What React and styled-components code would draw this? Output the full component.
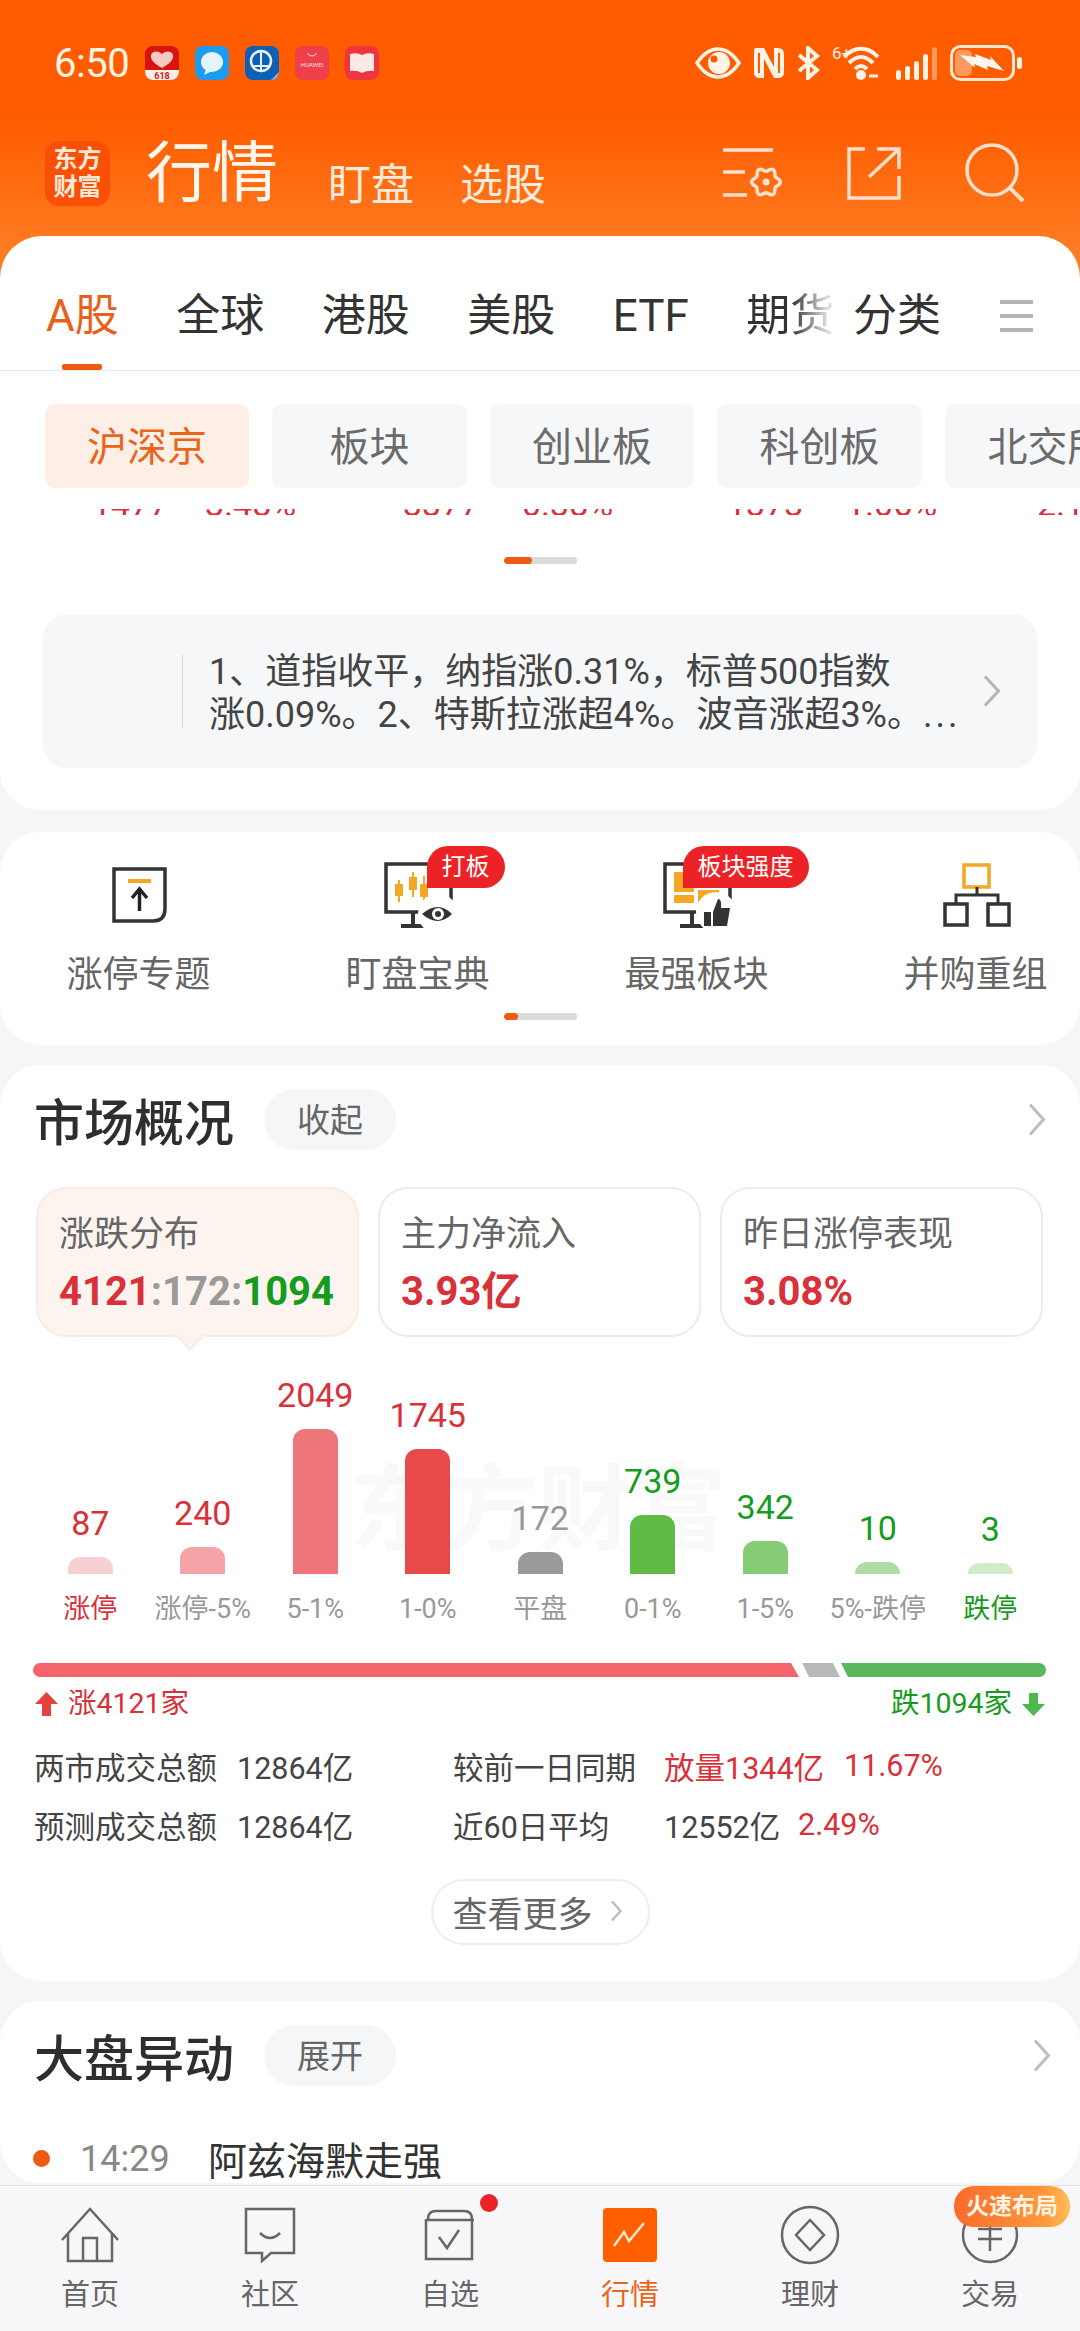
import React from "react";
import styled, { createGlobalStyle } from "styled-components";

const FONT = `Roboto, "Noto Sans CJK SC", sans-serif`;
const RED = "#d9303a";
const GREEN = "#169c1c";

const GlobalStyle = createGlobalStyle`
  html, body {
    margin: 0;
    padding: 0;
    background: #f5f6f8;
  }
  * {
    box-sizing: border-box;
  }
`;

const Page = styled.div`
  width: 1080px;
  height: 2331px;
  display: flex;
  flex-direction: column;
  overflow: hidden;
  font-family: ${FONT};
  color: #333;
  background: #f5f6f8;
`;

const Content = styled.div`
  flex: 1;
  min-height: 0;
  overflow: hidden;
`;

const Hero = styled.div`
  background: linear-gradient(#ff5c00 0, #ff5c00 120px, #ff7c22 250px, #ff7c22 100%);
`;

const StatusBar = styled.div`
  height: 126px;
  padding: 0 58px 0 54px;
  display: flex;
  align-items: center;
  color: #fff3e6;
`;

const Time = styled.div`
  width: 91px;
  font-size: 40px;
  letter-spacing: -0.5px;
`;

const Notices = styled.div`
  display: flex;
  gap: 16px;
`;

const Notice = styled.div`
  width: 34px;
  height: 34px;
  border-radius: 8px;
  overflow: hidden;
  background: ${(p) => p.$bg};
`;

const StatusIcons = styled.div`
  margin-left: auto;
  display: flex;
  align-items: center;
  gap: 12px;

  svg:nth-child(4) {
    margin-right: 5px;
  }
`;

const AppBar = styled.div`
  height: 110px;
  padding: 0 55px 16px 45px;
  display: flex;
  align-items: center;
`;

const Logo = styled.div`
  width: 65px;
  height: 65px;
  border-radius: 14px;
  background: #fa4f06;
  color: #ffe9d6;
  font-size: 24px;
  font-weight: 700;
  line-height: 28px;
  display: flex;
  flex-direction: column;
  align-items: center;
  justify-content: center;
`;

const Title = styled.div`
  margin: 2px 0 0 36px;
  width: 132px;
  font-size: 66px;
  line-height: 70px;
  color: #fff6ee;
`;

const SubTab = styled.div`
  margin: 24px 0 0 ${(p) => p.$left}px;
  font-size: 43px;
  line-height: 50px;
  color: #ffeadb;
`;

const AppActions = styled.div`
  margin-left: auto;
  display: flex;
  align-items: center;
  gap: 64px;
`;

const TabsPanel = styled.div`
  height: 135px;
  padding: 50px 0 0 46px;
  display: flex;
  background: #fff;
  border-radius: 42px 42px 0 0;
  border-bottom: 1px solid #e8e8ea;
`;

const TabList = styled.div`
  width: 789px;
  display: flex;
  gap: 57.5px;
  overflow: hidden;
`;

const Tab = styled.div`
  position: relative;
  flex: none;
  font-size: 44px;
  line-height: 60px;
  height: 84px;
  color: ${(p) => (p.$active ? "#e8601a" : "#333")};

  ${(p) =>
    p.$active &&
    `&::after {
      content: "";
      position: absolute;
      left: 16px;
      top: 78px;
      width: 40px;
      height: 6px;
      border-radius: 2px;
      background: #ee5b10;
    }`}
`;

const FadedTab = styled(Tab)`
  background: linear-gradient(90deg, #333 52%, #ddd 92%);
  -webkit-background-clip: text;
  background-clip: text;
  color: transparent;
`;

const CategoryTab = styled(Tab)`
  margin-left: 18px;
`;

const MenuBars = styled.div`
  margin: 14px 0 0 59px;
  width: 33px;
  height: 32px;
  display: flex;
  flex-direction: column;
  justify-content: space-between;

  span {
    height: 4px;
    background: #b4b4b4;
  }
`;

const QuoteCard = styled.div`
  background: #fff;
  border-radius: 0 0 40px 40px;
  padding: 33px 0 42px;
`;

const Chips = styled.div`
  display: flex;
  gap: 23px;
  padding-left: 45px;
  overflow: hidden;
`;

const Chip = styled.div`
  flex: none;
  width: ${(p) => p.$w}px;
  height: 84px;
  border-radius: 10px;
  font-size: 40px;
  line-height: 88px;
  text-align: center;
  color: ${(p) => (p.$active ? "#e8651c" : "#6b6b6b")};
  background: ${(p) => (p.$active ? "#fdeee6" : "#f6f7f9")};
`;

const ClippedQuotes = styled.div`
  height: 6px;
  margin-top: 21px;
  overflow: hidden;
  display: flex;
  align-items: flex-end;
  padding-left: 92px;
  font-size: 34px;
  line-height: 22px;
  color: ${RED};
`;

const ClippedValue = styled.span`
  flex: none;
  width: ${(p) => p.$w}px;
`;

const Pager = styled.div`
  width: 73px;
  height: 7px;
  margin: ${(p) => p.$top}px auto 0;
  border-radius: 4px;
  background: #dadada;
  overflow: hidden;
`;

const PagerFill = styled.div`
  height: 100%;
  width: ${(p) => p.$w}px;
  border-radius: 4px;
  background: #ee5b10;
`;

const NewsBox = styled.div`
  margin: 50px 43px 0;
  height: 154px;
  border-radius: 24px;
  background: #f6f7f9;
  display: flex;
  align-items: center;
  padding: 0 36px 0 139px;
`;

const NewsRule = styled.div`
  width: 1px;
  height: 73px;
  margin-right: 26px;
  background: #d8d8d8;
`;

const NewsText = styled.div`
  flex: 1;
  padding-top: 5px;
  font-size: 36px;
  line-height: 43px;
  color: #444;
  white-space: nowrap;
`;

const NewsMore = styled.span`
  letter-spacing: 3px;
`;

const Card = styled.div`
  background: #fff;
  border-radius: 40px;
  margin-top: ${(p) => p.$top}px;
`;

const ShortcutCard = styled(Card)`
  height: 213px;
  padding-top: 30px;
`;

const Shortcuts = styled.div`
  display: flex;
`;

const Shortcut = styled.div`
  flex: none;
  width: 279px;
  display: flex;
  flex-direction: column;
  align-items: center;
`;

const ShortcutIcon = styled.div`
  position: relative;
  width: ${(p) => p.$w}px;
  height: 66px;
  padding-top: ${(p) => p.$pad || 0}px;
`;

const ShortcutLabel = styled.div`
  margin: 24px 2px 0 0;
  font-size: 36px;
  line-height: 46px;
  color: #666;
`;

const HotTag = styled.div`
  position: absolute;
  top: -16px;
  left: ${(p) => p.$left}px;
  height: 42px;
  padding: 0 15px;
  border-radius: 21px 21px 21px 0;
  background: #ec2227;
  color: #fff;
  font-size: 24px;
  line-height: 42px;
  white-space: nowrap;
`;

const SectionHeader = styled.div`
  display: flex;
  align-items: center;
  padding: 24px 34px 0;
`;

const SectionTitle = styled.div`
  font-size: 50px;
  line-height: 61px;
  padding-top: 5px;
  height: 61px;
  font-weight: 500;
  color: #2e2e2e;
`;

const TogglePill = styled.div`
  margin-left: 30px;
  width: 132px;
  height: 61px;
  border-radius: 31px;
  background: #f5f6f8;
  font-size: 33px;
  line-height: 63px;
  text-align: center;
  color: #666;
`;

const SectionArrow = styled.div`
  margin-left: auto;
  margin-right: ${(p) => p.$right}px;
`;

const MarketCard = styled(Card)`
  padding-bottom: 36px;
`;

const Metrics = styled.div`
  display: flex;
  gap: 19px;
  margin: 37px 36px 0;
`;

const Metric = styled.div`
  position: relative;
  width: 323px;
  height: 150px;
  padding: 23px 0 0 21px;
  border-radius: 30px;
  border: 2px solid ${(p) => (p.$active ? "#f9ebe3" : "#ececec")};
  background: ${(p) => (p.$active ? "#fdf4ef" : "#fff")};

  ${(p) =>
    p.$active &&
    `&::after {
      content: "";
      position: absolute;
      left: 141px;
      bottom: -11px;
      width: 20px;
      height: 20px;
      background: #fdf4ef;
      border-right: 2px solid #f9ebe3;
      border-bottom: 2px solid #f9ebe3;
      transform: rotate(45deg);
    }`}
`;

const MetricTitle = styled.div`
  font-size: 35px;
  line-height: 46px;
  color: #666;
`;

const MetricValue = styled.div`
  margin-top: 11px;
  font-size: 40px;
  line-height: 46px;
  font-weight: 700;
  color: ${RED};
`;

const ValuePart = styled.span`
  color: ${(p) => p.$color};
`;

const Chart = styled.div`
  position: relative;
  height: 207px;
  margin-top: 30px;
  padding-left: 34px;
  display: flex;
  align-items: flex-end;
`;

const Watermark = styled.div`
  position: absolute;
  left: 350px;
  bottom: 8px;
  font-size: 94px;
  line-height: 110px;
  font-weight: 700;
  color: #f9f9f9;
  white-space: nowrap;
`;

const Column = styled.div`
  position: relative;
  width: 112.5px;
  display: flex;
  flex-direction: column;
  align-items: center;
`;

const BarValue = styled.div`
  font-size: 34px;
  line-height: 44px;
  margin-bottom: 12px;
  color: ${(p) => p.$color};
`;

const Bar = styled.div`
  width: 45px;
  border-radius: 12px 12px 0 0;
  background: ${(p) => p.$color};
`;

const AxisLabels = styled.div`
  display: flex;
  padding-left: 34px;
  margin-top: 18px;
`;

const AxisLabel = styled.div`
  width: 112.5px;
  text-align: center;
  font-size: 27px;
  line-height: 34px;
  white-space: nowrap;
  color: ${(p) => p.$color};
`;

const Split = styled.div`
  display: flex;
  height: 14px;
  margin: 37px 34px 0 33px;
`;

const SplitPart = styled.div`
  flex: none;
  width: ${(p) => p.$w}px;
  margin-left: ${(p) => p.$gap}px;
  background: ${(p) => p.$color};
  border-radius: ${(p) => p.$radius};
  clip-path: ${(p) => p.$clip};
`;

const Totals = styled.div`
  display: flex;
  justify-content: space-between;
  align-items: center;
  margin: 9px 34px 0;
  font-size: 28.5px;
  line-height: 36px;
`;

const TotalItem = styled.div`
  display: flex;
  align-items: center;
  gap: 9px;
  color: ${(p) => p.$color};
`;

const Stats = styled.div`
  margin: 14px 0 0 34px;
`;

const StatRow = styled.div`
  display: flex;
  align-items: center;
  height: 59px;
  font-size: 30.5px;
  color: #444;
  white-space: nowrap;
`;

const StatCell = styled.div`
  flex: none;
  width: ${(p) => p.$w}px;
`;

const Rise = styled.span`
  color: ${RED};
`;

const MoreButton = styled.div`
  width: 219px;
  height: 66px;
  margin: 25px auto 0;
  border: 2px solid #eeeeee;
  border-radius: 33px;
  display: flex;
  align-items: center;
  padding: 0 0 2px 20px;
  gap: 17px;
  font-size: 35px;
  color: #666;
`;

const MoveRow = styled.div`
  display: flex;
  align-items: center;
  margin: 47px 0 0 33px;
  height: 50px;
`;

const MoveDot = styled.div`
  width: 17px;
  height: 17px;
  border-radius: 50%;
  background: #ee5b10;
`;

const MoveTime = styled.div`
  margin-left: 30px;
  width: 128px;
  padding-top: 2px;
  font-size: 36px;
  color: #888;
`;

const MoveText = styled.div`
  font-size: 39px;
  color: #333;
`;

const Nav = styled.div`
  position: relative;
  height: 146px;
  flex: none;
  display: flex;
  background: #f7f7f9;
  border-top: 1px solid #e4e4e4;
`;

const NavItem = styled.div`
  position: relative;
  width: 180px;
  display: flex;
  flex-direction: column;
  align-items: center;
  padding-top: 19px;
`;

const NavIcon = styled.div`
  height: 60px;
  display: flex;
  align-items: center;
  justify-content: center;
`;

const NavLabel = styled.div`
  margin-top: 9px;
  font-size: 29px;
  line-height: 42px;
  color: ${(p) => (p.$active ? "#e8651c" : "#666")};
`;

const RedDot = styled.div`
  position: absolute;
  top: 8px;
  left: 120px;
  width: 18px;
  height: 18px;
  border-radius: 50%;
  background: #ec2227;
`;

const PromoTag = styled.div`
  position: absolute;
  right: 10px;
  top: 0;
  width: 116px;
  height: 41px;
  border-radius: 20px;
  background: linear-gradient(90deg, #fb6a2c, #ff9a3a 80%, #ffbe58);
  color: #fff2e0;
  font-size: 23px;
  font-weight: 700;
  line-height: 41px;
  text-align: center;
  white-space: nowrap;
`;

// scalloped gear outline used by the header settings icon
const gearPath = (() => {
  const pts = [];
  for (let i = 0; i < 72; i++) {
    const a = (i / 72) * Math.PI * 2;
    const r = 12.5 + 1.8 * Math.cos(a * 6);
    pts.push(`${(16 + r * Math.cos(a)).toFixed(1)} ${(15 + r * Math.sin(a)).toFixed(1)}`);
  }
  return `M${pts.join("L")}Z`;
})();

const Chevron = ({ w = 18, h = 33, color = "#bdbdbd", sw = 3 }) => (
  <svg width={w} height={h} viewBox={`0 0 ${w} ${h}`} style={{ display: "block" }}>
    <path d={`M2 1.5 L${w - 2.5} ${h / 2} L2 ${h - 1.5}`} fill="none" stroke={color} strokeWidth={sw} />
  </svg>
);

const EyeStatus = () => (
  <svg width="46" height="32" viewBox="0 0 46 32">
    <path d="M2 16 C10 4 17 2 23 2 C29 2 36 4 44 16 C36 28 29 30 23 30 C17 30 10 28 2 16Z" fill="none" stroke="#fff3e6" strokeWidth="3.5" />
    <circle cx="24" cy="16" r="11" fill="#fff3e6" />
    <circle cx="19" cy="12" r="3.5" fill="#ff5c00" />
  </svg>
);

const NfcStatus = () => (
  <svg width="32" height="32" viewBox="0 0 32 32">
    <path d="M7 1 H2 Q1 1 1 7 V25 Q1 31 7 31 H11 V12 L21 31 H25 Q31 31 31 25 V7 Q31 1 25 1 H21 V20 L11 1Z" fill="#fff3e6" />
    <path d="M6 6 V26 M26 6 V26" stroke="#ff5c00" strokeWidth="2" />
    <path d="M14 4 L19 14" stroke="#ff5c00" strokeWidth="2" />
  </svg>
);

const BluetoothStatus = () => (
  <svg width="23" height="34" viewBox="0 0 23 34">
    <path d="M2 9 L20 24 L11 32 L11 2 L20 10 L2 25" fill="none" stroke="#fff3e6" strokeWidth="4" />
  </svg>
);

const WifiStatus = () => (
  <svg width="47" height="36" viewBox="0 0 47 36">
    <text x="0" y="14" fontSize="17" fill="#fff3e6" fontFamily="Roboto">6+</text>
    <path d="M12 12 C22 1 36 1 46 12 M17 18 C25 10 33 10 41 18 M23 24 C27 20 31 20 35 24" fill="none" stroke="#fff3e6" strokeWidth="4" />
    <circle cx="29" cy="30" r="5" fill="#fff3e6" />
    <path d="M37 31 H46" stroke="#fff3e6" strokeWidth="3" />
  </svg>
);

const SignalStatus = () => (
  <svg width="42" height="34" viewBox="0 0 42 34">
    <rect x="0" y="24" width="5" height="10" rx="2.5" fill="#fff3e6" />
    <rect x="9" y="20" width="5" height="14" rx="2.5" fill="#fff3e6" />
    <rect x="18" y="15" width="5" height="19" rx="2.5" fill="#fff3e6" />
    <rect x="27" y="8" width="5" height="26" rx="2.5" fill="#fff3e6" />
    <rect x="36" y="1" width="5" height="33" rx="2.5" fill="#ff9a5e" />
  </svg>
);

const BatteryStatus = () => (
  <svg width="72" height="36" viewBox="0 0 72 36">
    <rect x="1.5" y="1.5" width="62" height="33" rx="9" fill="none" stroke="#ffe6d2" strokeWidth="3" />
    <rect x="5" y="5" width="17" height="26" rx="5" fill="#ff9a5e" />
    <path d="M10 10 L26 12 L25 9 L41 15 L40 11 L54 26 L37 21 L38 25 L24 19 L25 23Z" fill="#fff6ee" />
    <rect x="67" y="12" width="5" height="12" rx="2.5" fill="#fff3e6" />
  </svg>
);

const SettingsAction = () => (
  <svg width="60" height="52" viewBox="0 0 60 52">
    <g transform="translate(27 20)">
      <path d={gearPath} fill="none" stroke="#fde0cc" strokeWidth="3.5" />
      <circle cx="16" cy="15" r="3.5" fill="#fde0cc" />
    </g>
    <path d="M0 3 H50 M0 25 H22 M0 48 H24" stroke="#fde0cc" strokeWidth="3.5" />
  </svg>
);

const ShareAction = () => (
  <svg width="54" height="53" viewBox="0 0 54 53">
    <path d="M18 2 H2 V51 H52 V29 M22 30 L52 2 M30 2 H52 V22" fill="none" stroke="#fde0cc" strokeWidth="3.5" />
  </svg>
);

const SearchAction = () => (
  <svg width="60" height="60" viewBox="0 0 60 60">
    <circle cx="27" cy="27" r="25" fill="none" stroke="#fde0cc" strokeWidth="3.5" />
    <path d="M45 45 L58 58" stroke="#fde0cc" strokeWidth="4" />
  </svg>
);

const LimitUpIcon = () => (
  <svg width="55" height="56" viewBox="0 0 55 56" style={{ display: "block" }}>
    <path d="M2 2 H53 V42 Q53 54 41 54 H2Z" fill="none" stroke="#333" strokeWidth="3.5" />
    <path d="M16 14 H39" stroke="#f5a623" strokeWidth="4" />
    <path d="M27.5 44 V24 M20 31 L27.5 22 L35 31" fill="none" stroke="#222" strokeWidth="3.5" />
  </svg>
);

const MonitorFrame = () => (
  <>
    <path d="M67 40 V2 H2 V50 H66" fill="none" stroke="#333" strokeWidth="3.5" />
    <path d="M29 50 V64 M17 64 H40" stroke="#333" strokeWidth="4" />
  </>
);

const WatchIcon = () => (
  <svg width="70" height="66" viewBox="0 0 70 66" style={{ display: "block" }}>
    <MonitorFrame />
    <path d="M15 18 V40 M29 10 V35 M40 14 V42" stroke="#f5a623" strokeWidth="2" />
    <rect x="11" y="22" width="8" height="12" fill="#f5a623" />
    <rect x="25" y="15" width="8" height="13" fill="#f5a623" />
    <rect x="36" y="22" width="8" height="13" fill="#f5a623" />
    <circle cx="54" cy="52" r="20" fill="#fff" />
    <path d="M38 52 Q54 38 68 52 Q54 66 38 52Z" fill="#333" />
    <circle cx="54" cy="52" r="6" fill="#fff" />
    <circle cx="54" cy="52" r="3" fill="#333" />
  </svg>
);

const BoardIcon = () => (
  <svg width="70" height="66" viewBox="0 0 70 66" style={{ display: "block" }}>
    <MonitorFrame />
    <rect x="11" y="10" width="20" height="20" fill="#f5a623" />
    <rect x="11" y="33" width="20" height="8" rx="1" fill="#f5a623" />
    <rect x="35" y="28" width="21" height="12" fill="#f5a623" />
    <circle cx="53" cy="50" r="20" fill="#fff" />
    <rect x="41" y="50" width="7" height="14" fill="#333" />
    <path d="M50 50 L55 37 Q59 37 58 46 H67 L64 64 H50Z" fill="#333" />
  </svg>
);

const MergeIcon = () => (
  <svg width="68" height="64" viewBox="0 0 68 64" style={{ display: "block" }}>
    <rect x="21" y="2" width="25" height="22" fill="none" stroke="#f5a623" strokeWidth="3.5" />
    <path d="M34 24 V32 M13 42 V32 H55 V42" fill="none" stroke="#333" strokeWidth="3" />
    <rect x="2" y="41" width="22" height="21" fill="none" stroke="#333" strokeWidth="3.5" />
    <rect x="45" y="41" width="21" height="21" fill="none" stroke="#333" strokeWidth="3.5" />
  </svg>
);

const ArrowUp = () => (
  <svg width="25" height="26" viewBox="0 0 25 26" style={{ display: "block" }}>
    <path d="M12.5 1 L24 13 H17 V25 H8 V13 H1Z" fill="#e8403c" />
  </svg>
);

const ArrowDown = () => (
  <svg width="25" height="25" viewBox="0 0 25 25" style={{ display: "block" }}>
    <path d="M12.5 24 L24 12 H17 V1 H8 V12 H1Z" fill="#4db84c" />
  </svg>
);

const navStroke = { fill: "none", stroke: "#666", strokeWidth: 2.5 };

const HomeNav = () => (
  <svg width="60" height="56" viewBox="0 0 60 56">
    <path d="M2 33 L30 2 L58 33 M8 27 V54 H52 V27 M23 54 V31 H37 V54" {...navStroke} />
  </svg>
);

const CommunityNav = () => (
  <svg width="52" height="56" viewBox="0 0 52 56">
    <path d="M2 2 H50 V46 H27 L18 54 V46 H2Z" {...navStroke} />
    <path d="M16 26 Q26 36 36 26" {...navStroke} />
  </svg>
);

const WatchNav = () => (
  <svg width="52" height="52" viewBox="0 0 52 52">
    <path d="M4 10 Q4 2 12 2 H40 Q48 2 48 10 V50 H2 V10 M2 11 H50" {...navStroke} />
    <path d="M15 28 L23 39 L35 21" {...navStroke} />
  </svg>
);

const MarketNav = () => (
  <svg width="54" height="54" viewBox="0 0 54 54">
    <rect width="54" height="54" rx="4" fill="#ff5f00" />
    <path d="M11 38 L21 24 L26 33 L41 15" fill="none" stroke="#ffe6d2" strokeWidth="2.5" />
  </svg>
);

const FinanceNav = () => (
  <svg width="60" height="60" viewBox="0 0 60 60">
    <circle cx="30" cy="30" r="28" {...navStroke} />
    <path d="M30 15 L44 30 L30 45 L16 30Z" {...navStroke} />
  </svg>
);

const TradeNav = () => (
  <svg width="60" height="60" viewBox="0 0 60 60">
    <circle cx="30" cy="30" r="27" {...navStroke} />
    <path d="M30 14 V46 M18 24 H42 M18 34 H42" {...navStroke} />
  </svg>
);

const bars = [
  { value: 87, label: "涨停", h: 17, bar: "#f8cfd2", text: RED, labelColor: RED },
  { value: 240, label: "涨停-5%", h: 27, bar: "#f4a4a9", text: RED, labelColor: "#999" },
  { value: 2049, label: "5-1%", h: 145, bar: "#ee7579", text: RED, labelColor: "#999" },
  { value: 1745, label: "1-0%", h: 125, bar: "#e84949", text: RED, labelColor: "#999" },
  { value: 172, label: "平盘", h: 22, bar: "#9a9a9a", text: "#999", labelColor: "#999" },
  { value: 739, label: "0-1%", h: 59, bar: "#5fbb46", text: GREEN, labelColor: "#999" },
  { value: 342, label: "1-5%", h: 33, bar: "#86cc75", text: GREEN, labelColor: "#999" },
  { value: 10, label: "5%-跌停", h: 12, bar: "#afdca3", text: GREEN, labelColor: "#999" },
  { value: 3, label: "跌停", h: 11, bar: "#d2ecca", text: GREEN, labelColor: GREEN },
];

const navItems = [
  { label: "首页", icon: <HomeNav /> },
  { label: "社区", icon: <CommunityNav /> },
  { label: "自选", icon: <WatchNav />, dot: true },
  { label: "行情", icon: <MarketNav />, active: true },
  { label: "理财", icon: <FinanceNav /> },
  { label: "交易", icon: <TradeNav /> },
];

const App = () => {
  return (
    <Page>
      <GlobalStyle />
      <Content>
        <Hero>
          <StatusBar>
            <Time>6:50</Time>
            <Notices>
              <Notice $bg="#d8140f">
                <svg width="34" height="34" viewBox="0 0 34 34" style={{ display: "block" }}>
                  <path d="M17 22 C10 18 5 14 6 9 C7 5 13 4 17 8 C21 4 27 5 28 9 C29 14 24 18 17 22Z" fill="#f8c9c0" />
                  <rect y="24" width="34" height="10" fill="#f7efe8" />
                  <text x="17" y="33" fontSize="9" fontWeight="700" textAnchor="middle" fill="#d8140f" fontFamily="Roboto">618</text>
                </svg>
              </Notice>
              <Notice $bg="#1c9bf0">
                <svg width="34" height="34" viewBox="0 0 34 34" style={{ display: "block" }}>
                  <ellipse cx="17" cy="16" rx="11" ry="10" fill="#e6f4fd" />
                  <path d="M11 23 L9 29 L17 25Z" fill="#e6f4fd" />
                </svg>
              </Notice>
              <Notice $bg="#0f5fb4">
                <svg width="34" height="34" viewBox="0 0 34 34" style={{ display: "block" }}>
                  <circle cx="16" cy="15" r="10" fill="none" stroke="#e8f2fb" strokeWidth="2.5" />
                  <path d="M16 6 V24 M9 20 H24" stroke="#e8f2fb" strokeWidth="2" />
                  <path d="M26 34 L34 26 V34Z" fill="#8ab8e6" />
                </svg>
              </Notice>
              <Notice $bg="#ee3f4a">
                <svg width="34" height="34" viewBox="0 0 34 34" style={{ display: "block" }}>
                  <path d="M12 7 Q17 13 22 7" fill="none" stroke="#ffe1e1" strokeWidth="1" />
                  <text x="17" y="21" fontSize="6.2" textAnchor="middle" fill="#ffe1e1" fontFamily="Roboto">HUAWEI</text>
                </svg>
              </Notice>
              <Notice $bg="#ee3540">
                <svg width="34" height="34" viewBox="0 0 34 34" style={{ display: "block" }}>
                  <path d="M5 8 Q12 6 17 9 Q22 6 29 8 V25 Q22 24 17 27 Q12 24 5 25Z" fill="#fde9e6" />
                </svg>
              </Notice>
            </Notices>
            <StatusIcons>
              <EyeStatus />
              <NfcStatus />
              <BluetoothStatus />
              <WifiStatus />
              <SignalStatus />
              <BatteryStatus />
            </StatusIcons>
          </StatusBar>
          <AppBar>
            <Logo>
              <span>东方</span>
              <span>财富</span>
            </Logo>
            <Title>行情</Title>
            <SubTab $left={50}>盯盘</SubTab>
            <SubTab $left={46}>选股</SubTab>
            <AppActions>
              <SettingsAction />
              <ShareAction />
              <SearchAction />
            </AppActions>
          </AppBar>
          <TabsPanel>
            <TabList>
              <Tab $active>A股</Tab>
              <Tab>全球</Tab>
              <Tab>港股</Tab>
              <Tab>美股</Tab>
              <Tab>ETF</Tab>
              <FadedTab>期货</FadedTab>
            </TabList>
            <CategoryTab>分类</CategoryTab>
            <MenuBars>
              <span />
              <span />
              <span />
            </MenuBars>
          </TabsPanel>
        </Hero>

        <QuoteCard>
          <Chips>
            <Chip $w={204} $active>沪深京</Chip>
            <Chip $w={195}>板块</Chip>
            <Chip $w={204}>创业板</Chip>
            <Chip $w={205}>科创板</Chip>
            <Chip $w={205}>北交所</Chip>
          </Chips>
          <ClippedQuotes>
            <ClippedValue $w={113}>1477</ClippedValue>
            <ClippedValue $w={198}>3.48%</ClippedValue>
            <ClippedValue $w={119}>3377</ClippedValue>
            <ClippedValue $w={205}>0.38%</ClippedValue>
            <ClippedValue $w={119}>1373</ClippedValue>
            <ClippedValue $w={191}>1.06%</ClippedValue>
            <ClippedValue $w={60}>2.1</ClippedValue>
          </ClippedQuotes>
          <Pager $top={42}>
            <PagerFill $w={28} />
          </Pager>
          <NewsBox>
            <NewsRule />
            <NewsText>
              <div>1、道指收平，纳指涨0.31%，标普500指数</div>
              <div>
                涨0.09%。2、特斯拉涨超4%。波音涨超3%。<NewsMore>...</NewsMore>
              </div>
            </NewsText>
            <Chevron w={18} h={32} color="#b5b5b5" />
          </NewsBox>
        </QuoteCard>

        <ShortcutCard $top={22}>
          <Shortcuts>
            <Shortcut>
              <ShortcutIcon $w={55} $pad={5}>
                <LimitUpIcon />
              </ShortcutIcon>
              <ShortcutLabel>涨停专题</ShortcutLabel>
            </Shortcut>
            <Shortcut>
              <ShortcutIcon $w={70}>
                <WatchIcon />
                <HotTag $left={43}>打板</HotTag>
              </ShortcutIcon>
              <ShortcutLabel>盯盘宝典</ShortcutLabel>
            </Shortcut>
            <Shortcut>
              <ShortcutIcon $w={70}>
                <BoardIcon />
                <HotTag $left={20}>板块强度</HotTag>
              </ShortcutIcon>
              <ShortcutLabel>最强板块</ShortcutLabel>
            </Shortcut>
            <Shortcut>
              <ShortcutIcon $w={68} $pad={1}>
                <MergeIcon />
              </ShortcutIcon>
              <ShortcutLabel>并购重组</ShortcutLabel>
            </Shortcut>
          </Shortcuts>
          <Pager $top={15}>
            <PagerFill $w={14} />
          </Pager>
        </ShortcutCard>

        <MarketCard $top={20}>
          <SectionHeader>
            <SectionTitle>市场概况</SectionTitle>
            <TogglePill>收起</TogglePill>
            <SectionArrow $right={0}>
              <Chevron />
            </SectionArrow>
          </SectionHeader>
          <Metrics>
            <Metric $active>
              <MetricTitle>涨跌分布</MetricTitle>
              <MetricValue>
                4121<ValuePart $color="#9a9a9a">:172:</ValuePart>
                <ValuePart $color={GREEN}>1094</ValuePart>
              </MetricValue>
            </Metric>
            <Metric>
              <MetricTitle>主力净流入</MetricTitle>
              <MetricValue>3.93亿</MetricValue>
            </Metric>
            <Metric>
              <MetricTitle>昨日涨停表现</MetricTitle>
              <MetricValue>3.08%</MetricValue>
            </Metric>
          </Metrics>
          <Chart>
            <Watermark>东方财富</Watermark>
            {bars.map((b) => (
              <Column key={b.label}>
                <BarValue $color={b.text}>{b.value}</BarValue>
                <Bar $color={b.bar} style={{ height: b.h }} />
              </Column>
            ))}
          </Chart>
          <AxisLabels>
            {bars.map((b) => (
              <AxisLabel key={b.label} $color={b.labelColor}>
                {b.label}
              </AxisLabel>
            ))}
          </AxisLabels>
          <Split>
            <SplitPart
              $w={766}
              $gap={0}
              $color="#f4646a"
              $radius="7px 0 0 7px"
              $clip="polygon(0 0, calc(100% - 8px) 0, 100% 100%, 0 100%)"
            />
            <SplitPart
              $w={38}
              $gap={3}
              $color="#b9b9b9"
              $radius="0"
              $clip="polygon(0 0, calc(100% - 7px) 0, 100% 100%, 7px 100%)"
            />
            <SplitPart
              $w={205}
              $gap={1}
              $color="#59b85c"
              $radius="0 7px 7px 0"
              $clip="polygon(0 0, 100% 0, 100% 100%, 7px 100%)"
            />
          </Split>
          <Totals>
            <TotalItem $color={RED}>
              <ArrowUp />
              涨4121家
            </TotalItem>
            <TotalItem $color={GREEN}>
              跌1094家
              <ArrowDown />
            </TotalItem>
          </Totals>
          <Stats>
            <StatRow>
              <StatCell $w={203}>两市成交总额</StatCell>
              <StatCell $w={216}>12864亿</StatCell>
              <StatCell $w={211}>较前一日同期</StatCell>
              <StatCell $w={180}>
                <Rise>放量1344亿</Rise>
              </StatCell>
              <Rise>11.67%</Rise>
            </StatRow>
            <StatRow>
              <StatCell $w={203}>预测成交总额</StatCell>
              <StatCell $w={216}>12864亿</StatCell>
              <StatCell $w={211}>近60日平均</StatCell>
              <StatCell $w={134}>12552亿</StatCell>
              <Rise>2.49%</Rise>
            </StatRow>
          </Stats>
          <MoreButton>
            查看更多
            <Chevron w={13} h={22} sw={2.5} />
          </MoreButton>
        </MarketCard>

        <Card $top={20}>
          <SectionHeader>
            <SectionTitle>大盘异动</SectionTitle>
            <TogglePill>展开</TogglePill>
            <SectionArrow $right={-5}>
              <Chevron />
            </SectionArrow>
          </SectionHeader>
          <MoveRow>
            <MoveDot />
            <MoveTime>14:29</MoveTime>
            <MoveText>阿兹海默走强</MoveText>
          </MoveRow>
        </Card>
      </Content>

      <Nav>
        {navItems.map((item) => (
          <NavItem key={item.label}>
            <NavIcon>{item.icon}</NavIcon>
            <NavLabel $active={item.active}>{item.label}</NavLabel>
            {item.dot && <RedDot />}
          </NavItem>
        ))}
        <PromoTag>火速布局</PromoTag>
      </Nav>
    </Page>
  );
};

export default App;
